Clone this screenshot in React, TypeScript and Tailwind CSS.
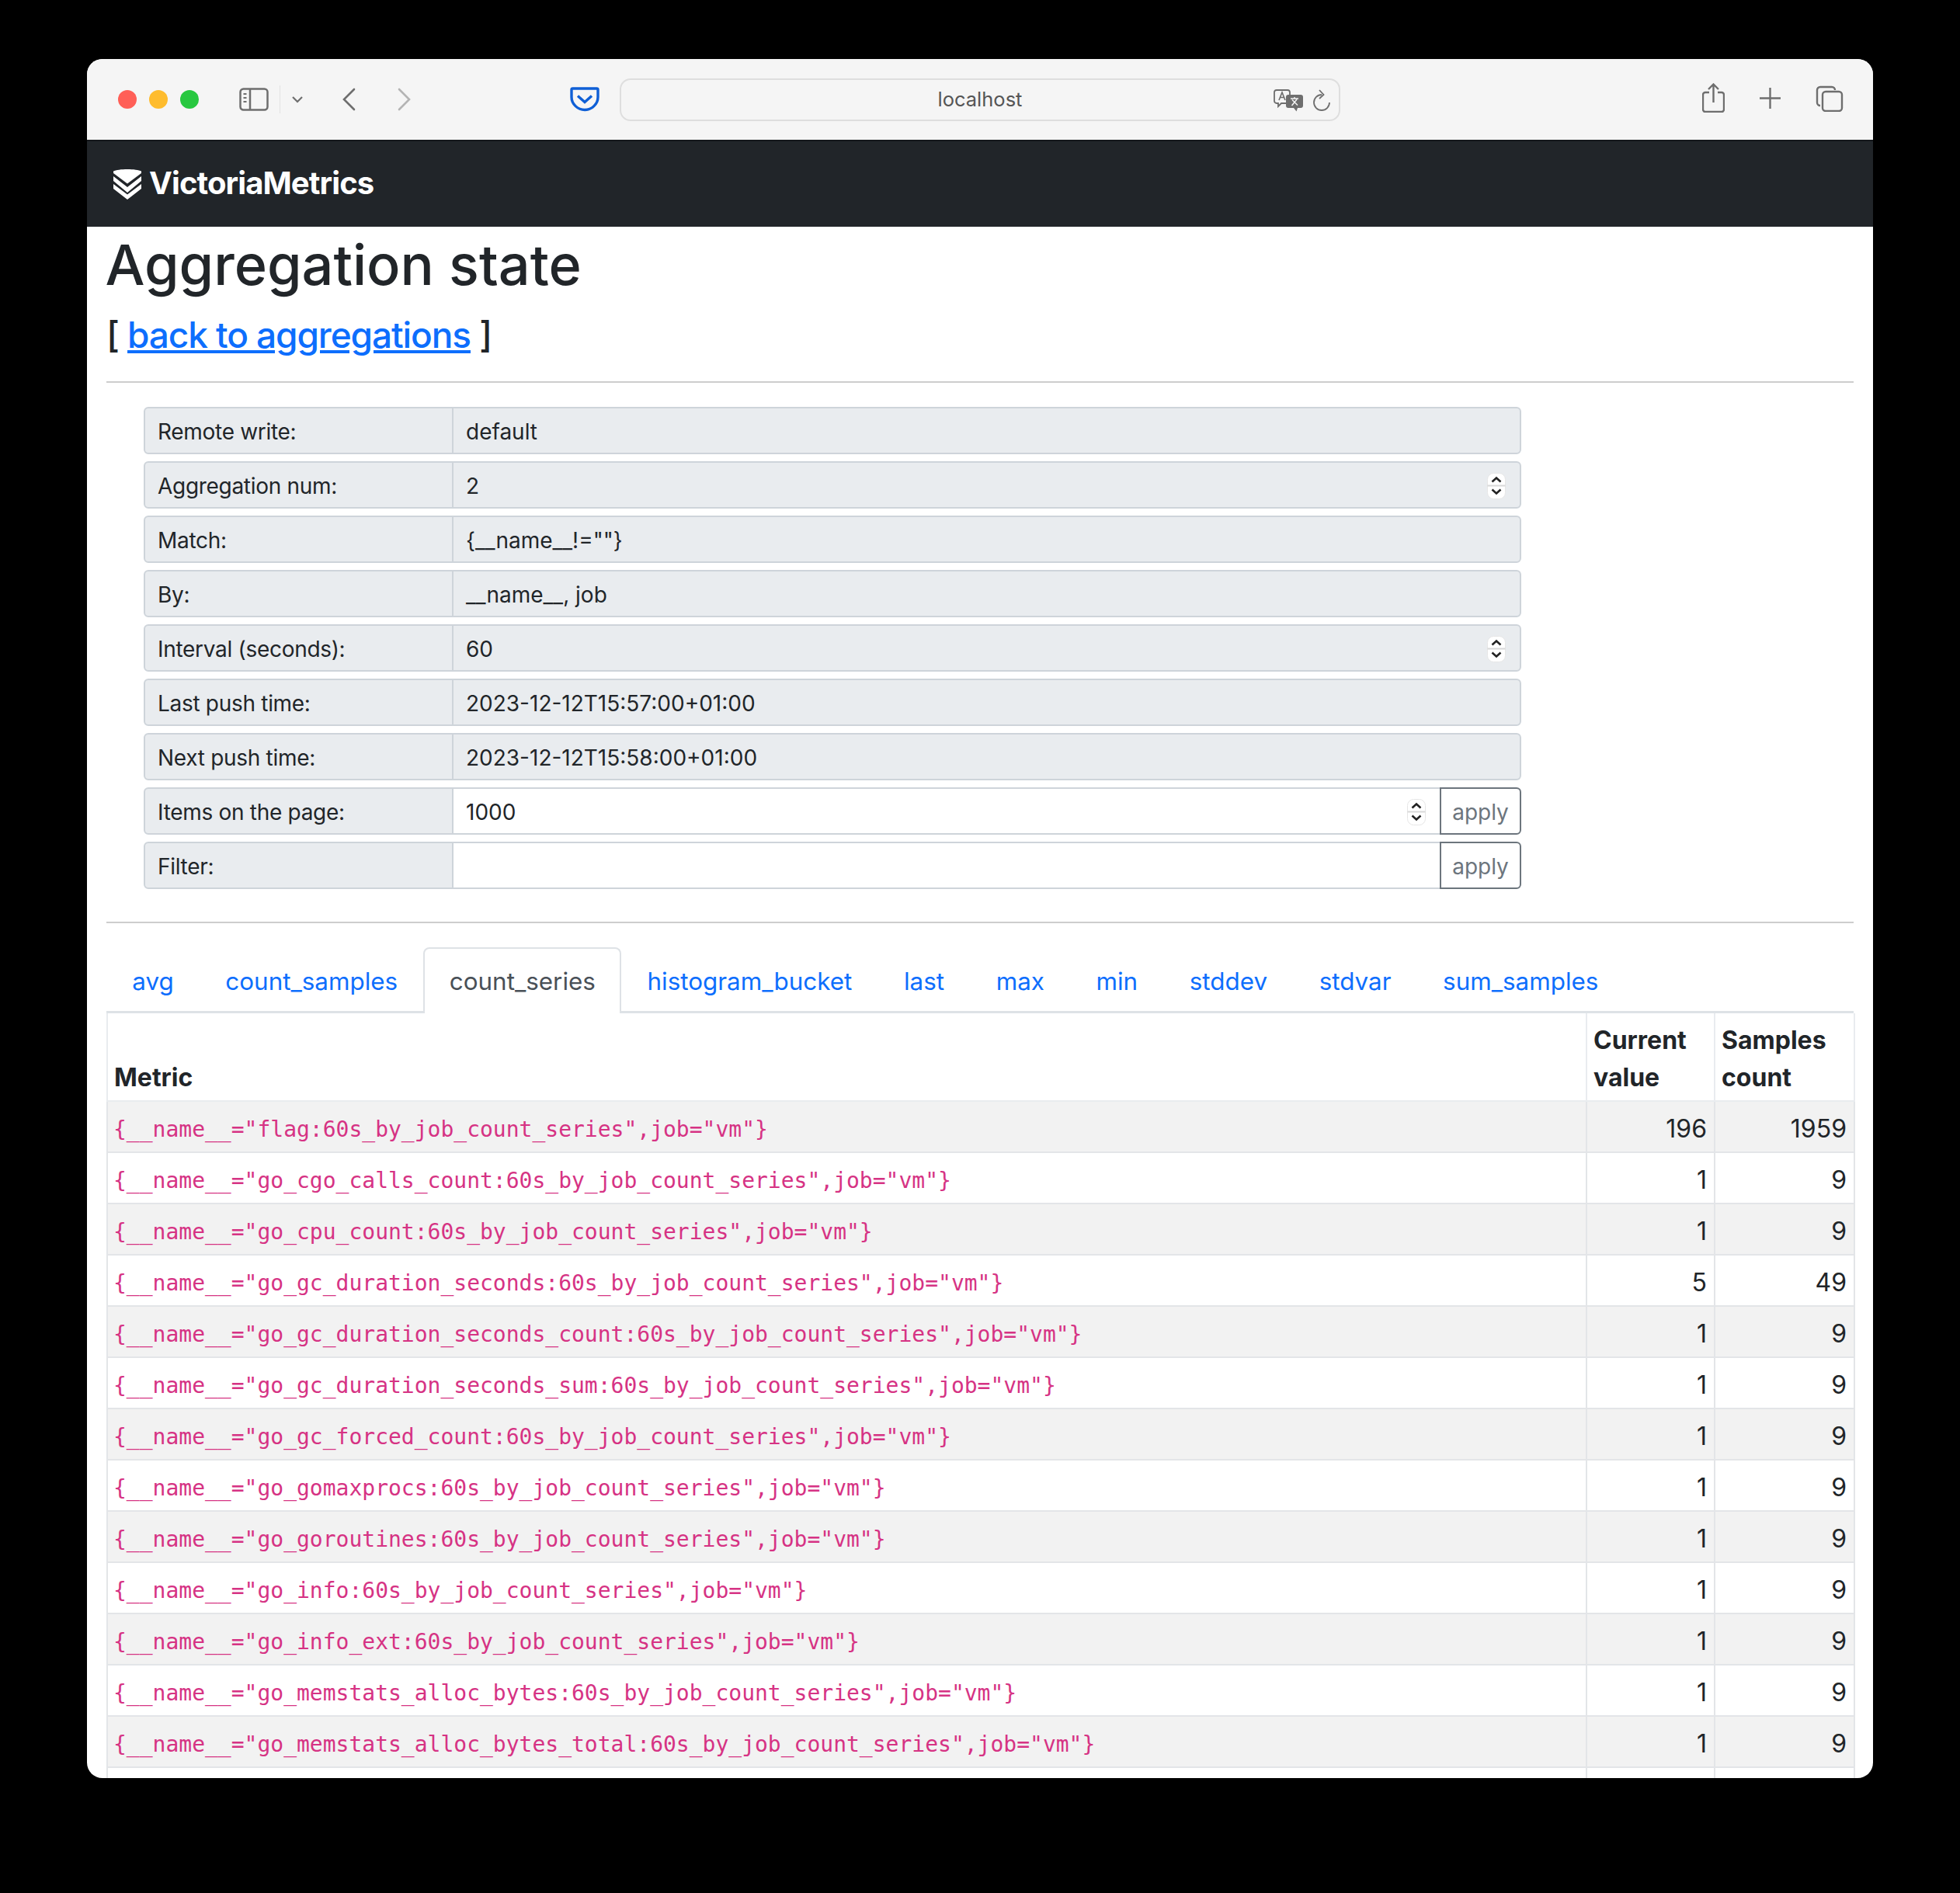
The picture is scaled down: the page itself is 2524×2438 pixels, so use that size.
const formRows = [
  { label: 'Remote write:', value: 'default' },
  { label: 'Aggregation num:', value: '2', spinner: true },
  { label: 'Match:', value: '{__name__!=""}' },
  { label: 'By:', value: '__name__, job' },
  { label: 'Interval (seconds):', value: '60', spinner: true },
  { label: 'Last push time:', value: '2023-12-12T15:57:00+01:00' },
  { label: 'Next push time:', value: '2023-12-12T15:58:00+01:00' },
]

const tabs = ['avg', 'count_samples', 'count_series', 'histogram_bucket', 'last', 'max', 'min', 'stddev', 'stdvar', 'sum_samples']

const metrics: [string, number, number][] = [
  ['flag', 196, 1959],
  ['go_cgo_calls_count', 1, 9],
  ['go_cpu_count', 1, 9],
  ['go_gc_duration_seconds', 5, 49],
  ['go_gc_duration_seconds_count', 1, 9],
  ['go_gc_duration_seconds_sum', 1, 9],
  ['go_gc_forced_count', 1, 9],
  ['go_gomaxprocs', 1, 9],
  ['go_goroutines', 1, 9],
  ['go_info', 1, 9],
  ['go_info_ext', 1, 9],
  ['go_memstats_alloc_bytes', 1, 9],
  ['go_memstats_alloc_bytes_total', 1, 9],
]

function Spinner() {
  return (
    <svg width="24" height="34" viewBox="0 0 24 34" className="shrink-0">
      <rect x="0.5" y="0.5" width="23" height="33" rx="8" fill="#fff" stroke="#e6e6e6" />
      <path d="M0.5 16.5H23.5" stroke="#d8d8d8" strokeWidth="2" />
      <path d="M6.5 11.5l5.5-5 5.5 5M6.5 21.5l5.5 5 5.5-5" fill="none" stroke="#222" strokeWidth="2.6" />
    </svg>
  )
}

function Toolbar() {
  return (
    <div className="flex h-[104px] items-center bg-[#f5f5f5] pl-[40px] pr-[38px]">
      <div className="flex gap-[16px]">
        <div className="h-[24px] w-[24px] rounded-full bg-[#ff5f57]" />
        <div className="h-[24px] w-[24px] rounded-full bg-[#febc2e]" />
        <div className="h-[24px] w-[24px] rounded-full bg-[#28c840]" />
      </div>
      <svg width="38" height="30" viewBox="0 0 38 30" className="ml-[52px]" fill="none" stroke="#6e6e6e" strokeWidth="2.5">
        <rect x="1.5" y="1.5" width="35" height="27" rx="4" />
        <path d="M14 2v26" />
        <path d="M5.5 8h4M5.5 13h4M5.5 18h4" strokeWidth="2" />
      </svg>
      <div className="ml-[14px] h-[36px] w-px bg-[#e2e2e2]" />
      <svg width="16" height="10" viewBox="0 0 16 10" className="ml-[14px]" fill="none" stroke="#6e6e6e" strokeWidth="2.2">
        <path d="M2 2l6 6 6-6" />
      </svg>
      <svg width="18" height="30" viewBox="0 0 18 30" className="ml-[49px] mb-[1px]" fill="none" stroke="#6e6e6e" strokeWidth="2.6" strokeLinecap="round">
        <path d="M16 2L3 15l13 13" />
      </svg>
      <svg width="18" height="30" viewBox="0 0 18 30" className="ml-[54px] mb-[1px]" fill="none" stroke="#b4b4b4" strokeWidth="2.6" strokeLinecap="round">
        <path d="M2 2l13 13L2 28" />
      </svg>
      <svg width="38" height="32" viewBox="0 0 38 32" className="ml-[204px]" fill="none" stroke="#0f5fd6" strokeWidth="3.4">
        <path d="M3.5 2h31a1.5 1.5 0 011.5 1.5V13c0 9-8 16.500-17 16.500S2 22 2 13V3.500A1.500 1.500 0 013.500 2z" strokeLinejoin="round" />
        <path d="M10 11.500l9 8 9-8" />
      </svg>
      <div className="relative ml-[26px] flex h-[55px] w-[928px] items-center justify-center rounded-[14px] border-2 border-[#dedede] bg-[#f5f5f5] font-['Inter',sans-serif] text-[25.5px] text-[#555]">
        localhost
        <div className="absolute right-[11px] top-[12px] flex items-start gap-[13px]">
          <svg width="38" height="29" viewBox="0 0 38 29">
            <path d="M4 1h14a3 3 0 013 3v11a3 3 0 01-3 3H10l-4 4v-4H4a3 3 0 01-3-3V4a3 3 0 013-3z" fill="#f5f5f5" stroke="#6e6e6e" strokeWidth="1.8" />
            <path d="M7 14l4-10 4 10M8.500 10.500h5" fill="none" stroke="#6e6e6e" strokeWidth="1.6" />
            <path d="M19 7h16a3 3 0 013 3v11a3 3 0 01-3 3h-4l-1.500 4.500L26 24h-7a3 3 0 01-3-3V10a3 3 0 013-3z" fill="#6e6e6e" />
            <path d="M22 12h10M27 10v2M23.500 21l6.500-8M24 13.500l7 7" fill="none" stroke="#f5f5f5" strokeWidth="1.5" />
          </svg>
          <svg width="22" height="28" viewBox="0 0 22 28" fill="none" stroke="#6e6e6e" strokeWidth="1.8">
            <path d="M11 7a10 10 0 1 0 10 10" />
            <path d="M8 1l5.500 6L8 12" />
          </svg>
        </div>
      </div>
      <div className="mb-[3px] ml-auto flex items-center gap-[45px]">
        <svg width="29" height="38" viewBox="0 0 29 38" className="mb-[2px]" fill="none" stroke="#6e6e6e" strokeWidth="2.4">
          <path d="M9 12H4a3 3 0 00-3 3v19a3 3 0 003 3h21a3 3 0 003-3V15a3 3 0 00-3-3h-5" />
          <path d="M14.500 25V2M8 8l6.500-6.500L21 8" />
        </svg>
        <svg width="27" height="27" viewBox="0 0 27 27" fill="none" stroke="#6e6e6e" strokeWidth="2.4">
          <path d="M13.500 0v27M0 13.500h27" />
        </svg>
        <svg width="36" height="34" viewBox="0 0 36 34" fill="none" stroke="#6e6e6e" strokeWidth="2.4">
          <path d="M6 26a4 4 0 01-4-4V6a4 4 0 014-4h15a4 4 0 014 4" />
          <rect x="9" y="8" width="25" height="25" rx="4" />
        </svg>
      </div>
    </div>
  )
}

function Logo() {
  return (
    <svg width="36" height="40" viewBox="0 0 36 40" fill="#fff">
      <path d="M0 3.500C6 0 30 0 36 3.500V6L18 19.500 0 6z" />
      <path d="M0 10l18 14 18-14v6L18 31 0 16z" />
      <path d="M0 20l18 13.500L36 20v6L18 40 0 26z" />
    </svg>
  )
}

export default function App() {
  return (
    <div className="h-[2438px] w-[2524px] bg-black pl-[112px] pt-[76px] font-['Inter',sans-serif] text-[#212529]">
      <div className="h-[2214px] w-[2300px] overflow-hidden rounded-[20px] bg-white">
        <Toolbar />
        <div className="flex h-[112px] items-center gap-[10px] border-t-2 border-[#15181b] bg-[#212529] pl-[34px]">
          <Logo />
          <span className="pb-[2px] text-[40px] font-bold tracking-[-0.9px] text-white">VictoriaMetrics</span>
        </div>
        <div className="px-[25px]">
          <h1 className="-ml-[1.5px] h-[96px] text-[72px] font-medium leading-[98px]">Aggregation state</h1>
          <div className="h-[90px] text-[46px] font-medium leading-[86px] tracking-[-1.1px]">
            [ <a className="text-[#0d6efd] underline">back to aggregations</a> ]
          </div>
          <hr className="mt-[13px] border-t-2 border-[#cdcdcd]" />

          <div className="ml-[48px] mt-[31px] w-[1774px] text-[28px]">
            {formRows.map((r) => (
              <div key={r.label} className="mb-[9px] flex h-[61px] overflow-hidden rounded-[6px] border-2 border-[#ced4da] bg-[#e9ecef]">
                <div className="flex w-[397px] shrink-0 items-center border-r-2 border-[#ced4da] pl-[16px] pt-[2px] tracking-[-0.3px]">{r.label}</div>
                <div className="flex flex-1 items-center justify-between pl-[16px] pr-[18px] pt-[2px]">
                  {r.value}
                  {r.spinner && <Spinner />}
                </div>
              </div>
            ))}
            <div className="mb-[9px] flex h-[61px]">
              <div className="flex w-[399px] shrink-0 items-center rounded-l-[6px] border-2 border-[#ced4da] bg-[#e9ecef] pl-[16px] pt-[2px] tracking-[-0.3px]">Items on the page:</div>
              <div className="flex flex-1 items-center justify-between border-y-2 border-[#ced4da] pl-[16px] pr-[18px] pt-[2px]">
                1000
                <Spinner />
              </div>
              <div className="flex w-[105px] items-center justify-center rounded-r-[6px] border-2 border-[#6c757d] pt-[2px] text-[#6c757d]">apply</div>
            </div>
            <div className="flex h-[61px]">
              <div className="flex w-[399px] shrink-0 items-center rounded-l-[6px] border-2 border-[#ced4da] bg-[#e9ecef] pl-[16px] pt-[2px] tracking-[-0.3px]">Filter:</div>
              <div className="flex-1 border-y-2 border-[#ced4da]" />
              <div className="flex w-[105px] items-center justify-center rounded-r-[6px] border-2 border-[#6c757d] pt-[2px] text-[#6c757d]">apply</div>
            </div>
          </div>

          <hr className="mt-[42px] border-t-2 border-[#cdcdcd]" />

          <div className="mt-[31px] flex h-[85px] border-b-[3px] border-[#dee2e6] text-[31.4px]">
            {tabs.map((t) =>
              t === 'count_series' ? (
                <div key={t} className="-mb-[3px] flex h-[85px] items-center rounded-t-[8px] border-2 border-b-0 border-[#dee2e6] bg-white px-[31.3px] pt-[2px] text-[#495057]">
                  {t}
                </div>
              ) : (
                <a key={t} className="flex h-[85px] items-center px-[33.3px] pt-[4px] text-[#0d6efd]">
                  {t}
                </a>
              ),
            )}
          </div>

          <table className="w-[2250px] table-fixed border-collapse text-[32px]">
            <colgroup>
              <col className="w-[1905px]" />
              <col className="w-[165px]" />
              <col className="w-[180px]" />
            </colgroup>
            <thead>
              <tr className="h-[113px] text-left align-bottom font-bold leading-[48px]">
                <th className="border-2 border-t-0 border-[#e9ecef] pb-[5px] pl-[8px] pr-[9px]">Metric</th>
                <th className="border-2 border-t-0 border-[#e9ecef] pb-[5px] pl-[8px] pr-[9px]">Current<br />value</th>
                <th className="border-2 border-t-0 border-[#e9ecef] pb-[5px] pl-[8px] pr-[9px]">Samples<br />count</th>
              </tr>
            </thead>
            <tbody>
              {metrics.map(([name, cur, samples], i) => (
                <tr key={name} className={i % 2 === 0 ? 'h-[66px] bg-[#f2f2f2]' : 'h-[66px] bg-white'}>
                  <td className="border-2 border-[#e3e5e8] pl-[7px] pr-[9px] pt-[8px] font-['DejaVu_Sans_Mono',monospace] text-[28px] text-[#d63384]">
                    {`{__name__="${name}:60s_by_job_count_series",job="vm"}`}
                  </td>
                  <td className="border-2 border-[#e3e5e8] px-[9px] pt-[6px] text-right">{cur}</td>
                  <td className="border-2 border-[#e3e5e8] px-[9px] pt-[6px] text-right">{samples}</td>
                </tr>
              ))}
              {/* next row only peeks in above the window edge */}
              <tr className="h-[66px] bg-white">
                <td className="border-2 border-[#e3e5e8]" />
                <td className="border-2 border-[#e3e5e8]" />
                <td className="border-2 border-[#e3e5e8]" />
              </tr>
            </tbody>
          </table>
        </div>
      </div>
    </div>
  )
}
